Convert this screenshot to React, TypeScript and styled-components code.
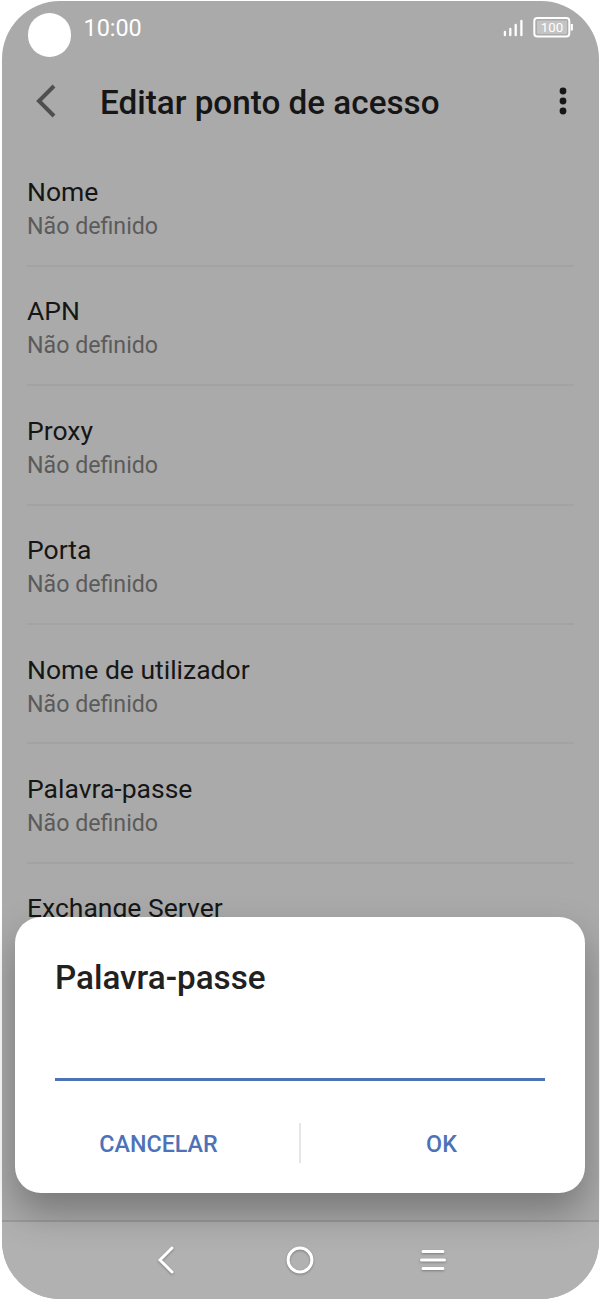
import React from 'react';
import styled, { createGlobalStyle } from 'styled-components';

const Global = createGlobalStyle`
  * { box-sizing: border-box; }
  body { margin: 0; background: #fff; font-family: Roboto, sans-serif; }
`;

const Phone = styled.div`
  position: relative;
  width: 600px;
  height: 1300px;
  padding: 1px 1.500px;
  overflow: hidden;
  background: #fff;
`;
const Screen = styled.div`
  display: flex;
  flex-direction: column;
  height: 1298px;
  border-radius: 58px;
  background: #aaa;
  overflow: hidden;
`;
const StatusBar = styled.div`
  display: flex;
  align-items: flex-start;
  height: 70px;
  padding: 12px 25.500px 0 26px;
  color: #fff;
`;
const Camera = styled.div`
  width: 43.500px;
  height: 43.500px;
  border-radius: 50%;
  background: #fff;
  margin-right: 12.500px;
`;
const Clock = styled.div`
  flex: 1;
  font-size: 23.400px;
  line-height: 28px;
  margin-top: 1px;
`;
const StatusIcons = styled.svg`
  font-family: Roboto, sans-serif;
`;
const Header = styled.header`
  display: flex;
  align-items: center;
  height: 63px;
  padding: 0 27.700px 0 33.800px;
`;
const HeaderIcon = styled.svg`
  margin-bottom: 4px;
`;
const Title = styled.h1`
  flex: 1;
  margin: 0 0 0 43.700px;
  font-size: 33.250px;
  font-weight: 500;
  line-height: 40px;
  color: #161616;
`;
const List = styled.main`
  flex: 1;
  min-height: 0;
  overflow: hidden;
  padding: 13.200px 24.500px 0 25.500px;
`;
const Item = styled.section`
  height: 119.450px;
  padding-top: 28.600px;
  border-bottom: 2px solid #a3a3a3;
`;
const ItemName = styled.div`
  font-size: 26.500px;
  line-height: 32px;
  color: #161616;
`;
const ItemValue = styled.div`
  margin-top: 3.200px;
  font-size: 23.200px;
  line-height: 30px;
  color: #5b5b5b;
`;
const NavBar = styled.nav`
  display: flex;
  justify-content: space-between;
  align-items: center;
  height: 79px;
  padding: 0 150.500px;
  border-top: 2px solid #9a9a9a;
  background: #b1b1b1;
`;
const NavIcon = styled.svg`
  margin-bottom: 1px;
  filter: drop-shadow(0 1px 1px rgba(0, 0, 0, 0.3));
`;
const Dialog = styled.div`
  position: absolute;
  left: 15px;
  top: 917px;
  width: 570px;
  height: 276px;
  padding: 40px 40px 0;
  border-radius: 26px;
  background: #fff;
  box-shadow: 0 19px 38px rgba(0, 0, 0, 0.3);
`;
const DialogTitle = styled.h2`
  margin: 0;
  font-size: 33.250px;
  font-weight: 500;
  line-height: 42px;
  color: #212121;
`;
const Input = styled.div`
  height: 81.500px;
  border-bottom: 3px solid #4e72b8;
`;
const Actions = styled.div`
  display: flex;
  align-items: center;
  height: 40px;
  margin: 42.500px -37px 0;
`;
const Action = styled.button`
  flex: 1;
  padding: 2px 0 0;
  border: 0;
  background: none;
  font: 500 23.300px/40px Roboto, sans-serif;
  color: #4e72b8;
`;
const Divider = styled.div`
  width: 2px;
  height: 40px;
  background: #e6e6e6;
`;

const items = ['Nome', 'APN', 'Proxy', 'Porta', 'Nome de utilizador', 'Palavra-passe', 'Exchange Server'];

export default function App() {
  return (
    <Phone>
      <Global />
      <Screen>
        <StatusBar>
          <Camera />
          <Clock>10:00</Clock>
          <StatusIcons width="72" height="28" viewBox="501 13 72 28" fill="none">
            <path d="M504.900 32v3.200M510.300 29v6.200M515.700 25v10.200M521.400 21v14.200" stroke="#fff" strokeWidth="2.300" strokeLinecap="round" />
            <rect x="534.300" y="18" width="35" height="18.400" rx="3" stroke="#fff" strokeWidth="2" />
            <rect x="537" y="20.500" width="30" height="13.500" rx="1" fill="#c4c4c4" />
            <path d="M571.800 24v6.500" stroke="#fff" strokeWidth="2.200" />
            <text x="552" y="32" textAnchor="middle" fontSize="13.300" fill="#fff">100</text>
          </StatusIcons>
        </StatusBar>
        <Header>
          <HeaderIcon width="21" height="34" viewBox="0 0 21 34" fill="none">
            <path d="M19 2L4 17l15 15" stroke="#4f4f4f" strokeWidth="4" />
          </HeaderIcon>
          <Title>Editar ponto de acesso</Title>
          <HeaderIcon width="16" height="30" viewBox="0 0 16 30" fill="#161616">
            <circle cx="8" cy="5" r="3.400" />
            <circle cx="8" cy="15" r="3.400" />
            <circle cx="8" cy="25" r="3.400" />
          </HeaderIcon>
        </Header>
        <List>
          {items.map((name) => (
            <Item key={name}>
              <ItemName>{name}</ItemName>
              <ItemValue>Não definido</ItemValue>
            </Item>
          ))}
        </List>
        <NavBar>
          <NavIcon width="30" height="30" viewBox="0 0 30 30" fill="none" stroke="#fff" strokeWidth="3" strokeLinecap="round"><path d="M20 3L8 15l12 12" /></NavIcon>
          <NavIcon width="30" height="30" viewBox="0 0 30 30" fill="none" stroke="#fff" strokeWidth="3"><circle cx="15" cy="15" r="11.900" /></NavIcon>
          <NavIcon width="30" height="30" viewBox="0 0 30 30" fill="none" stroke="#fff" strokeWidth="3" strokeLinecap="round"><path d="M5 6.500h20M3.500 15h23M5 23.500h20" /></NavIcon>
        </NavBar>
      </Screen>
      <Dialog role="dialog">
        <DialogTitle>Palavra-passe</DialogTitle>
        <Input />
        <Actions>
          <Action>CANCELAR</Action>
          <Divider />
          <Action>OK</Action>
        </Actions>
      </Dialog>
    </Phone>
  );
}
